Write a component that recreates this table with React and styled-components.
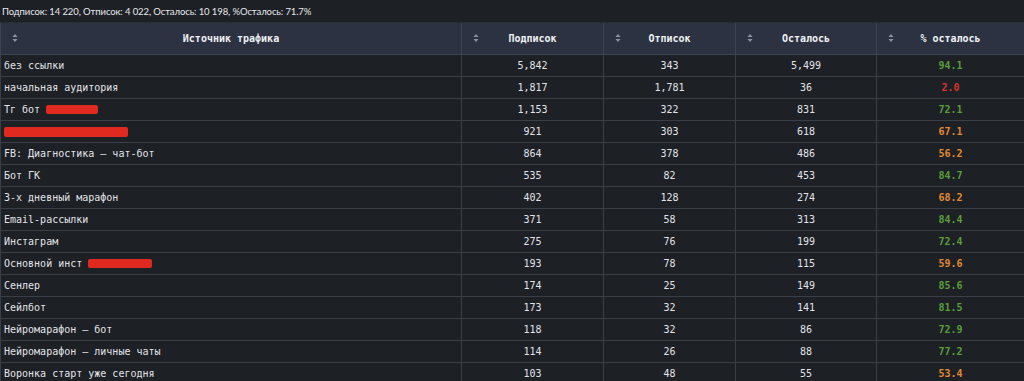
import React from "react";
import styled, { createGlobalStyle } from "styled-components";

const Global = createGlobalStyle`
  html, body { margin: 0; padding: 0; background: #1d2025; }
  body { overflow: hidden; }
`;

const Page = styled.div`
  width: 1024px;
  background: #1d2025;
`;

const Summary = styled.div`
  height: 23px;
  display: flex;
  align-items: center;
  padding-left: 2px;
  font-family: "Lato", "Noto Sans", sans-serif;
  font-size: 9.5px;
  letter-spacing: -0.1px;
  color: #e6e8eb;
  border-bottom: 1px solid #2a2e35;
  box-sizing: border-box;
`;

const Table = styled.table`
  width: 1024px;
  border-collapse: collapse;
  table-layout: fixed;
  font-family: "DejaVu Sans Mono", monospace;
  font-size: 10px;
  color: #e2e4e8;
  border-left: 1px solid #3a3f48;
`;

const HeadCell = styled.th`
  position: relative;
  height: 31px;
  padding: 0;
  background: #2c3241;
  border: 1px solid #3d4350;
  border-top: none;
  font-weight: bold;
  text-align: center;
  color: #eef0f3;
  box-sizing: border-box;
`;

const SortIcon = styled.svg`
  position: absolute;
  left: 11px;
  top: 50%;
  transform: translateY(-50%);
`;

const Row = styled.tr`
  height: 22px;
`;

const Cell = styled.td`
  padding: 0 0 0 ${(p) => (p.$left ? "3px" : "0")};
  text-align: ${(p) => (p.$left ? "left" : "center")};
  border: 1px solid #393e47;
  border-top: none;
  color: ${(p) => p.$color || "#e2e4e8"};
  font-weight: ${(p) => (p.$color ? "bold" : "normal")};
  white-space: nowrap;
  box-sizing: border-box;
`;

const Redact = styled.span`
  display: inline-block;
  vertical-align: middle;
  width: ${(p) => p.$w}px;
  height: ${(p) => p.$h || 9}px;
  background: #e02a1f;
  border-radius: 2px;
`;

const Sort = () => (
  <SortIcon width="6" height="9" viewBox="0 0 6 9">
    <path d="M3 0.5 L5.5 3.5 L0.5 3.5 Z" fill="#8d93a0" />
    <path d="M3 8.5 L5.5 5.5 L0.5 5.5 Z" fill="#8d93a0" />
  </SortIcon>
);

const pctColor = (v) => (v >= 70 ? "#5a9e3a" : v >= 50 ? "#e08a32" : "#d5342c");

const rows = [
  [<>без ссылки</>, "5,842", "343", "5,499", 94.1],
  [<>начальная аудитория</>, "1,817", "1,781", "36", 2.0],
  [<>Тг бот <Redact $w={52} $h={9} /></>, "1,153", "322", "831", 72.1],
  [<Redact $w={124} $h={10} />, "921", "303", "618", 67.1],
  [<>FB: Диагностика – чат-бот</>, "864", "378", "486", 56.2],
  [<>Бот ГК</>, "535", "82", "453", 84.7],
  [<>3-х дневный марафон</>, "402", "128", "274", 68.2],
  [<>Email-рассылки</>, "371", "58", "313", 84.4],
  [<>Инстаграм</>, "275", "76", "199", 72.4],
  [<>Основной инст <Redact $w={64} $h={9} /></>, "193", "78", "115", 59.6],
  [<>Сенлер</>, "174", "25", "149", 85.6],
  [<>Сейлбот</>, "173", "32", "141", 81.5],
  [<>Нейромарафон – бот</>, "118", "32", "86", 72.9],
  [<>Нейромарафон – личные чаты</>, "114", "26", "88", 77.2],
  [<>Воронка старт уже сегодня</>, "103", "48", "55", 53.4],
];

const cols = [
  { title: "Источник трафика", w: 461 },
  { title: "Подписок", w: 142 },
  { title: "Отписок", w: 132 },
  { title: "Осталось", w: 141 },
  { title: "% осталось", w: 148 },
];

export default function App() {
  return (
    <Page>
      <Global />
      <Summary>Подписок: 14 220, Отписок: 4 022, Осталось: 10 198, %Осталось: 71.7%</Summary>
      <Table>
        <colgroup>
          {cols.map((c) => (
            <col key={c.title} style={{ width: c.w }} />
          ))}
        </colgroup>
        <thead>
          <tr>
            {cols.map((c) => (
              <HeadCell key={c.title}>
                <Sort />
                {c.title}
              </HeadCell>
            ))}
          </tr>
        </thead>
        <tbody>
          {rows.map((r, i) => (
            <Row key={i}>
              <Cell $left>{r[0]}</Cell>
              <Cell>{r[1]}</Cell>
              <Cell>{r[2]}</Cell>
              <Cell>{r[3]}</Cell>
              <Cell $color={pctColor(r[4])}>{r[4].toFixed(1)}</Cell>
            </Row>
          ))}
        </tbody>
      </Table>
    </Page>
  );
}
